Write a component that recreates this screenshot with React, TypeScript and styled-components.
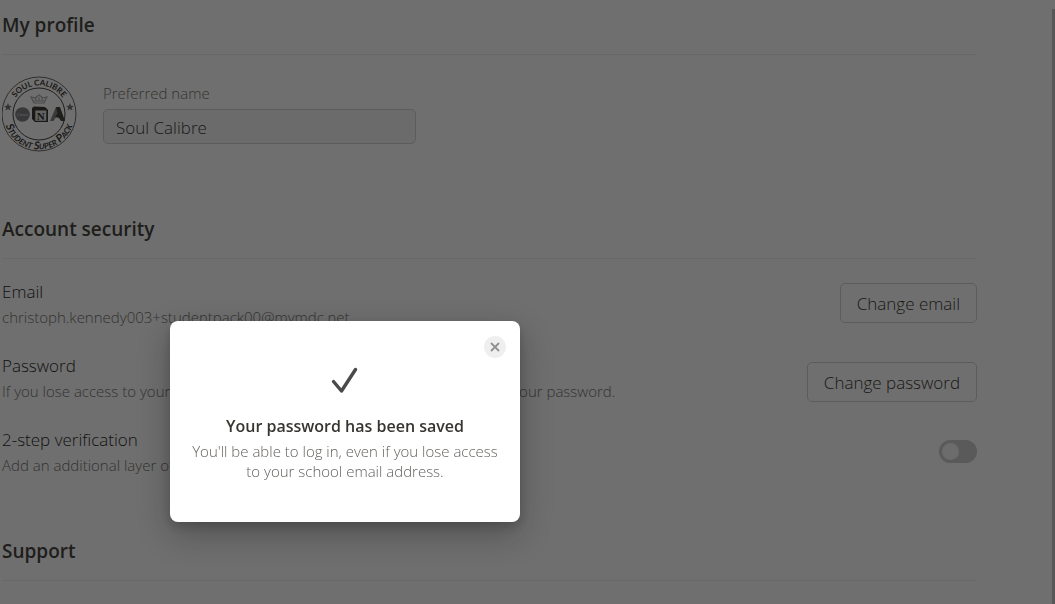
import React, { useState } from 'react';
import styled, { createGlobalStyle } from 'styled-components';

const GlobalStyle = createGlobalStyle`
  *, *::before, *::after { box-sizing: border-box; }
  html, body { margin: 0; height: 100%; }
  body {
    background: #ffffff;
    color: #37352f;
    font-family: "Open Sans", "Noto Sans", sans-serif;
    overflow: hidden;
  }
  h1, h2, h3, p { margin: 0; }
  button, input { font: inherit; color: inherit; }
`;

const Page = styled.main`
  display: flex;
  flex-direction: column;
  padding: 8px 78px 0 2px;
`;

const Section = styled.section<{ $space: number }>`
  display: flex;
  flex-direction: column;
  padding-bottom: ${(p) => p.$space}px;
`;

const SectionTitle = styled.h2`
  padding: 3px 0 15px;
  border-bottom: 1px solid #ededed;
  font-size: 19px;
  line-height: 28px;
  font-weight: 600;
`;

const ProfileRow = styled.div`
  display: flex;
  align-items: flex-start;
  gap: 25px;
  padding-top: 21px;
`;

const Avatar = styled.svg`
  flex: none;
  width: 76px;
  height: 76px;
`;

const Field = styled.div`
  display: flex;
  flex-direction: column;
  gap: 6px;
  padding-top: 7px;
  flex: 0 1 313px;
`;

const FieldLabel = styled.label`
  font-size: 15px;
  line-height: 20px;
  font-weight: 300;
  color: #6b6965;
`;

const TextInput = styled.input`
  width: 100%;
  height: 35px;
  padding: 2px 12px 0;
  border: 1px solid #cfcfcf;
  border-radius: 5px;
  background: #f6f6f6;
  font-size: 17px;
  font-weight: 300;
  color: #2b2a26;
  outline: none;
`;

const SettingList = styled.div`
  display: flex;
  flex-direction: column;
  padding-top: 19px;
`;

const SettingRow = styled.div<{ $align?: string }>`
  display: flex;
  align-items: ${(p) => p.$align ?? 'center'};
  justify-content: space-between;
  padding-bottom: 24px;
`;

const SettingTitle = styled.h3`
  font-size: 17px;
  line-height: 28px;
  font-weight: 300;
  color: #14130f;
`;

const SettingNote = styled.p`
  font-size: 15px;
  line-height: 22px;
  font-weight: 300;
  color: #6b6965;
`;

const OutlineButton = styled.button`
  height: 40px;
  padding: 0 16px;
  border: 1px solid #cfcfcf;
  border-radius: 5px;
  background: transparent;
  font-size: 17px;
  font-weight: 300;
  color: #2b2a26;
`;

const Toggle = styled.input`
  appearance: none;
  display: flex;
  align-items: center;
  width: 38px;
  height: 23px;
  margin: 0;
  padding: 3px;
  border-radius: 12px;
  background: #cacaca;

  &::before {
    content: "";
    width: 17px;
    height: 17px;
    border-radius: 50%;
    background: #f7f7f7;
  }
  &:checked {
    justify-content: flex-end;
  }
`;

const Backdrop = styled.div`
  position: fixed;
  inset: 0;
  background: rgba(15, 15, 15, 0.6);
`;

const ScrollTrack = styled.div`
  position: fixed;
  top: 9px;
  right: 0;
  bottom: 0;
  width: 3px;
  background: #575757;
`;

const Dialog = styled.section`
  position: absolute;
  top: 321px;
  left: 170px;
  width: 350px;
  display: flex;
  flex-direction: column;
  align-items: center;
  padding: 44px 20px 41px;
  border-radius: 8px;
  background: #ffffff;
  box-shadow: 0 4px 8px rgba(15, 15, 15, 0.15), 0 12px 32px rgba(15, 15, 15, 0.3);
  text-align: center;
`;

const CloseButton = styled.button`
  position: absolute;
  top: 15px;
  right: 14px;
  display: flex;
  align-items: center;
  justify-content: center;
  width: 22px;
  height: 22px;
  padding: 0;
  border: 0;
  border-radius: 50%;
  background: #efefef;
  color: #919191;
`;

const CheckIcon = styled.svg`
  width: 32px;
  height: 32px;
`;

const DialogTitle = styled.h1`
  padding-top: 15px;
  font-size: 16px;
  line-height: 28px;
  font-weight: 600;
  color: #37352f;
`;

const DialogText = styled.p`
  padding-top: 1px;
  font-size: 15px;
  line-height: 20px;
  font-weight: 300;
  color: #64625e;
`;

function StudentPackLogo() {
  return (
    <Avatar viewBox="1 0 76 76" role="img" aria-label="Soul Calibre Student Super Pack">
      <defs>
        <path id="badge-top" d="M9.5 38a28.500 28.500 0 0 1 57 0" />
        <path id="badge-bottom" d="M2.500 38a35.500 35.500 0 0 0 71 0" />
      </defs>
      <g fill="none" stroke="#37352f">
        <circle cx="38" cy="38" r="37" strokeWidth="0.800" />
        <circle cx="38" cy="38" r="26" strokeWidth="1" />
      </g>
      <g fill="#2b2a26" fontFamily="Lato, sans-serif" fontWeight="700" textAnchor="middle">
        <text fontSize="8"><textPath href="#badge-top" startOffset="50%">SOUL CALIBRE</textPath></text>
        <text fontSize="11" fontStyle="italic" fontVariant="small-caps"><textPath href="#badge-bottom" startOffset="50%">Student Super Pack</textPath></text>
      </g>
      <g fill="#6e6d69">
        <path id="badge-star" d="M7 27l1.100 2.700 2.900.2-2.200 1.900.7 2.800L7 33.100l-2.500 1.500.7-2.800L3 29.900l2.900-.2z" />
        <use href="#badge-star" x="62" />
      </g>
      <g fill="none" stroke="#a5a5a5" strokeWidth="1.200">
        <path d="M33 27l-3-6 4 1 4-3 4 3 4-1-3 6z" />
        <path d="M32 25h12M35 22v3M38 21v4M41 22v3" />
      </g>
      <circle cx="21.500" cy="38.500" r="7.300" fill="#76767a" />
      <text x="21.500" y="40" fontSize="4" fontStyle="italic" fontFamily="Lato, sans-serif" textAnchor="middle" fill="#d8d8d8">Canva</text>
      <path d="M31 32l2-1.500 11 .5 3 3v12H34l-3-3z" fill="#2b2a26" />
      <path d="M34.300 34.500h11v10.300h-11z" fill="#dedede" />
      <text x="39.800" y="43.500" fontSize="11" fontWeight="700" fontFamily="Liberation Serif, serif" textAnchor="middle" fill="#1f1e1b">N</text>
      <path d="M49 45l6-14h4l-1.500 6-5 8z" fill="#7b7b7b" />
      <path d="M55 31h4l5 14h-4l-2-3-4-1 2.500-3.500z" fill="#37352f" />
    </Avatar>
  );
}

export default function App() {
  const [name, setName] = useState('Soul Calibre');
  const [open, setOpen] = useState(true);

  return (
    <>
      <GlobalStyle />
      <Page>
        <Section $space={60}>
          <SectionTitle>My profile</SectionTitle>
          <ProfileRow>
            <StudentPackLogo />
            <Field>
              <FieldLabel htmlFor="preferred-name">Preferred name</FieldLabel>
              <TextInput id="preferred-name" value={name} onChange={(e) => setName(e.target.value)} />
            </Field>
          </ProfileRow>
        </Section>

        <Section $space={34}>
          <SectionTitle>Account security</SectionTitle>
          <SettingList>
            <SettingRow>
              <div>
                <SettingTitle>Email</SettingTitle>
                <SettingNote>christoph.kennedy003+studentpack00@mymdc.net</SettingNote>
              </div>
              <OutlineButton type="button">Change email</OutlineButton>
            </SettingRow>
            <SettingRow $align="flex-end">
              <div>
                <SettingTitle>Password</SettingTitle>
                <SettingNote>If you lose access to your school email address, you'll be able to log in using your password.</SettingNote>
              </div>
              <OutlineButton type="button">Change password</OutlineButton>
            </SettingRow>
            <SettingRow>
              <div>
                <SettingTitle id="two-step">2-step verification</SettingTitle>
                <SettingNote>Add an additional layer of security.</SettingNote>
              </div>
              <Toggle type="checkbox" role="switch" aria-labelledby="two-step" />
            </SettingRow>
          </SettingList>
        </Section>

        <Section $space={0}>
          <SectionTitle>Support</SectionTitle>
        </Section>
      </Page>

      {open && (
        <>
          <Backdrop />
          <ScrollTrack />
          <Dialog role="dialog" aria-modal="true" aria-labelledby="dialog-title">
            <CloseButton type="button" aria-label="Close" onClick={() => setOpen(false)}>
              <svg width="10" height="10" viewBox="0 0 10 10" fill="none" stroke="currentColor" strokeWidth="1.800">
                <path d="M1 1l8 8M9 1l-8 8" />
              </svg>
            </CloseButton>
            <CheckIcon viewBox="0 0 32 32" fill="none" stroke="#4a4a4a" strokeWidth="3.400" strokeLinecap="round" strokeLinejoin="round">
              <path d="M4.500 16.500L12.500 26L26.500 4.500" />
            </CheckIcon>
            <DialogTitle id="dialog-title">Your password has been saved</DialogTitle>
            <DialogText>
              You'll be able to log in, even if you lose access
              <br />
              to your school email address.
            </DialogText>
          </Dialog>
        </>
      )}
    </>
  );
}
